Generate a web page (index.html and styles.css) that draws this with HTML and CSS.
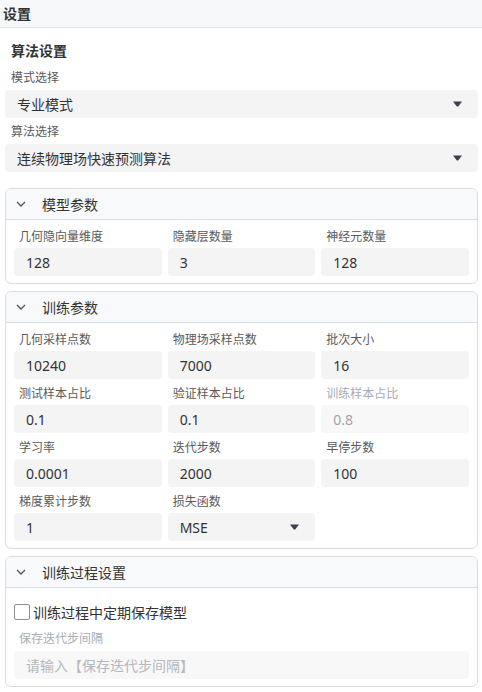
FILE: index.html
```html
<!DOCTYPE html>
<html lang="zh-CN">
<head>
<meta charset="utf-8">
<title>设置</title>
<link rel="stylesheet" href="styles.css">
</head>
<body>
<div class="topbar">设置</div>

<div class="main">
  <div class="section-title">算法设置</div>

  <div class="top-label first">模式选择</div>
  <div class="select">
    <span>专业模式</span>
    <svg class="caret" width="9" height="6" viewBox="0 0 9 6"><path d="M0 0.5H9L5.2 5.5H3.8Z" fill="#3b4152"/></svg>
  </div>

  <div class="top-label">算法选择</div>
  <div class="select">
    <span>连续物理场快速预测算法</span>
    <svg class="caret" width="9" height="6" viewBox="0 0 9 6"><path d="M0 0.5H9L5.2 5.5H3.8Z" fill="#3b4152"/></svg>
  </div>

  <div class="panel panel-first">
    <div class="panel-head">
      <svg class="chev" width="10" height="6" viewBox="0 0 10 6"><path d="M1 1L5 5L9 1" fill="none" stroke="#555" stroke-width="1.3"/></svg>
      <span>模型参数</span>
    </div>
    <div class="panel-body grid">
      <div class="cell"><div class="label">几何隐向量维度</div><div class="input">128</div></div>
      <div class="cell"><div class="label">隐藏层数量</div><div class="input">3</div></div>
      <div class="cell"><div class="label">神经元数量</div><div class="input">128</div></div>
    </div>
  </div>

  <div class="panel">
    <div class="panel-head">
      <svg class="chev" width="10" height="6" viewBox="0 0 10 6"><path d="M1 1L5 5L9 1" fill="none" stroke="#555" stroke-width="1.3"/></svg>
      <span>训练参数</span>
    </div>
    <div class="panel-body grid">
      <div class="cell"><div class="label">几何采样点数</div><div class="input">10240</div></div>
      <div class="cell"><div class="label">物理场采样点数</div><div class="input">7000</div></div>
      <div class="cell"><div class="label">批次大小</div><div class="input">16</div></div>

      <div class="cell"><div class="label">测试样本占比</div><div class="input">0.1</div></div>
      <div class="cell"><div class="label">验证样本占比</div><div class="input">0.1</div></div>
      <div class="cell disabled"><div class="label">训练样本占比</div><div class="input">0.8</div></div>

      <div class="cell"><div class="label">学习率</div><div class="input">0.0001</div></div>
      <div class="cell"><div class="label">迭代步数</div><div class="input">2000</div></div>
      <div class="cell"><div class="label">早停步数</div><div class="input">100</div></div>

      <div class="cell"><div class="label">梯度累计步数</div><div class="input">1</div></div>
      <div class="cell"><div class="label">损失函数</div>
        <div class="input select-input">
          <span>MSE</span>
          <svg class="caret" width="9" height="6" viewBox="0 0 9 6"><path d="M0 0.5H9L5.2 5.5H3.8Z" fill="#3b4152"/></svg>
        </div>
      </div>
    </div>
  </div>

  <div class="panel">
    <div class="panel-head">
      <svg class="chev" width="10" height="6" viewBox="0 0 10 6"><path d="M1 1L5 5L9 1" fill="none" stroke="#555" stroke-width="1.3"/></svg>
      <span>训练过程设置</span>
    </div>
    <div class="panel-body">
      <label class="check-row"><span class="checkbox"></span><span>训练过程中定期保存模型</span></label>
      <div class="cell disabled">
        <div class="label label-gap">保存迭代步间隔</div>
        <div class="input placeholder">请输入【保存迭代步间隔】</div>
      </div>
    </div>
  </div>
</div>
</body>
</html>
```

FILE: styles.css
```css
* {
  box-sizing: border-box;
}

body {
  margin: 0;
  background: #fff;
  color: #333;
  font-family: "Noto Sans", "Noto Sans CJK SC", sans-serif;
}

.topbar {
  height: 28px;
  line-height: 27px;
  padding-left: 3px;
  font-size: 14px;
  font-weight: bold;
  color: #333;
  background: #f7f8fa;
  border-bottom: 1px solid #e2e3e6;
}

.main {
  padding: 0 4px 0 5px;
}

.section-title {
  margin-top: 14px;
  padding-left: 6px;
  line-height: 18px;
  font-size: 14px;
  font-weight: bold;
  color: #333;
}

.top-label {
  margin-top: 5px;
  margin-bottom: 3px;
  padding-left: 6px;
  line-height: 18px;
  font-size: 12px;
  color: #5a5a5a;
}

.top-label.first {
  margin-top: 9px;
}

.select {
  height: 28px;
  padding: 0 16px 0 12px;
  display: flex;
  align-items: center;
  justify-content: space-between;
  background: #f4f4f5;
  border-radius: 4px;
  font-size: 14px;
  color: #333;
}

.caret {
  display: block;
  flex: none;
}

.panel {
  margin-top: 7px;
  border: 1px solid #d9dce1;
  border-radius: 6px;
  overflow: hidden;
}

.panel-first {
  margin-top: 16px;
}

.panel-head {
  height: 31px;
  display: flex;
  align-items: center;
  gap: 16px;
  padding-left: 10px;
  background: #f8f9fb;
  border-bottom: 1px solid #d9dce1;
  font-size: 14px;
  color: #333;
}

.chev {
  display: block;
  flex: none;
}

.panel-body {
  padding: 8px 8px 7px;
}

.grid {
  display: grid;
  grid-template-columns: repeat(3, 1fr);
  column-gap: 6px;
  row-gap: 6px;
}

.label {
  padding-left: 5px;
  margin-bottom: 2px;
  line-height: 18px;
  font-size: 12px;
  color: #5a5a5a;
  white-space: nowrap;
}

.input {
  height: 28px;
  padding: 0 12px;
  display: flex;
  align-items: center;
  background: #f4f4f5;
  border-radius: 4px;
  font-size: 14px;
  color: #333;
}

.select-input {
  justify-content: space-between;
  padding-right: 16px;
}

.disabled .label {
  color: #a8abb2;
}

.disabled .input {
  background: #f8f8f9;
  color: #a0a3a9;
}

.check-row {
  margin: 4px 0;
  height: 24px;
  display: flex;
  align-items: center;
  gap: 3px;
  font-size: 14px;
  color: #333;
}

.checkbox {
  width: 16px;
  height: 16px;
  border: 1px solid #8f8f8f;
  border-radius: 2px;
  background: #fff;
  flex: none;
}

.label-gap {
  margin-top: 6px;
  margin-bottom: 3px;
}

.input.placeholder {
  color: #b5b7bc;
}
```
